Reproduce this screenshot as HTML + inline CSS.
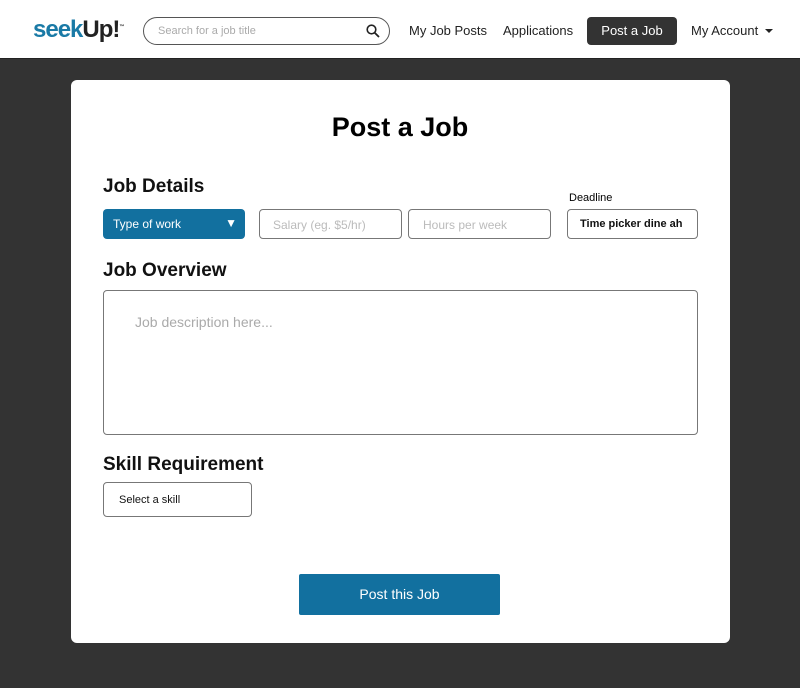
<!DOCTYPE html>
<html><head><style>
*{box-sizing:border-box;margin:0;padding:0}
body{width:800px;height:688px;background:#333;font-family:"Liberation Sans",sans-serif;position:relative;overflow:hidden}
.hdr{position:absolute;left:0;top:0;width:800px;height:59px;background:#fff;border-bottom:1px solid #222}
.abs{position:absolute;white-space:nowrap}
.logo{left:33px;top:16px;font-size:24px;font-weight:bold;letter-spacing:-1px}
.search{left:143px;top:17px;width:247px;height:28px;border:1px solid #555;border-radius:14px}
.nav{top:23px;font-size:13px;color:#222}
.post{left:587px;top:17px;width:90px;height:28px;background:#333;color:#fff;border-radius:4px;font-size:13px;text-align:center;line-height:28px}
.card{left:71px;top:80px;width:659px;height:563px;background:#fff;border-radius:6px}
h1{position:absolute;font-size:27px;font-weight:bold;left:0;width:800px;text-align:center;top:112px}
.h2{font-size:19px;font-weight:bold;color:#111}
.box{border:1px solid #777;border-radius:4px;font-size:12px}
</style></head><body>
<div class="hdr"></div>
<div class="abs logo"><span style="color:#1a7aa6">seek</span><span style="color:#222">Up!</span><sup style="font-size:5px;color:#222">™</sup></div>
<div class="abs search"><span class="abs" style="left:14px;top:7px;font-size:11px;color:#aaa">Search for a job title</span>
<svg class="abs" style="left:222px;top:6px" width="14" height="14" viewBox="0 0 14 14"><circle cx="5.5" cy="5.5" r="4.3" fill="none" stroke="#222" stroke-width="1.6"/><path d="M8.7 8.7L13 13" stroke="#222" stroke-width="1.8"/></svg></div>
<div class="abs nav" style="left:409px">My Job Posts</div>
<div class="abs nav" style="left:503px">Applications</div>
<div class="abs post">Post a Job</div>
<div class="abs nav" style="left:691px">My Account</div>
<svg class="abs" style="left:765px;top:29px" width="8" height="5"><path d="M0 0h8L4 4z" fill="#222"/></svg>
<div class="abs card"></div>
<h1>Post a Job</h1>
<div class="abs h2" style="left:103px;top:176px">Job Details</div>
<div class="abs" style="left:103px;top:209px;width:142px;height:30px;background:#12709f;border-radius:4px;color:#fff;font-size:12px;padding:8px 10px">Type of work<span class="abs" style="right:8px;top:7px;font-size:12px">▼</span></div>
<div class="abs box" style="left:259px;top:209px;width:143px;height:30px;color:#bbb;padding:8px 13px">Salary (eg. $5/hr)</div>
<div class="abs box" style="left:408px;top:209px;width:143px;height:30px;color:#bbb;padding:8px 14px">Hours per week</div>
<div class="abs" style="left:569px;top:192px;font-size:11px">Deadline</div>
<div class="abs box" style="left:567px;top:209px;width:131px;height:30px;padding:8px 12px;font-weight:bold;color:#111;font-size:11px">Time picker dine ah</div>
<div class="abs h2" style="left:103px;top:260px">Job Overview</div>
<div class="abs box" style="left:103px;top:290px;width:595px;height:145px;color:#aaa;font-size:14px;padding:23px 31px">Job description here...</div>
<div class="abs h2" style="left:103px;top:454px">Skill Requirement</div>
<div class="abs box" style="left:103px;top:482px;width:149px;height:35px;padding:11px 15px;color:#111;font-size:11px">Select a skill</div>
<div class="abs" style="left:299px;top:574px;width:201px;height:41px;background:#12709f;color:#fff;font-size:14px;text-align:center;line-height:41px;border-radius:2px">Post this Job</div>
</body></html>
